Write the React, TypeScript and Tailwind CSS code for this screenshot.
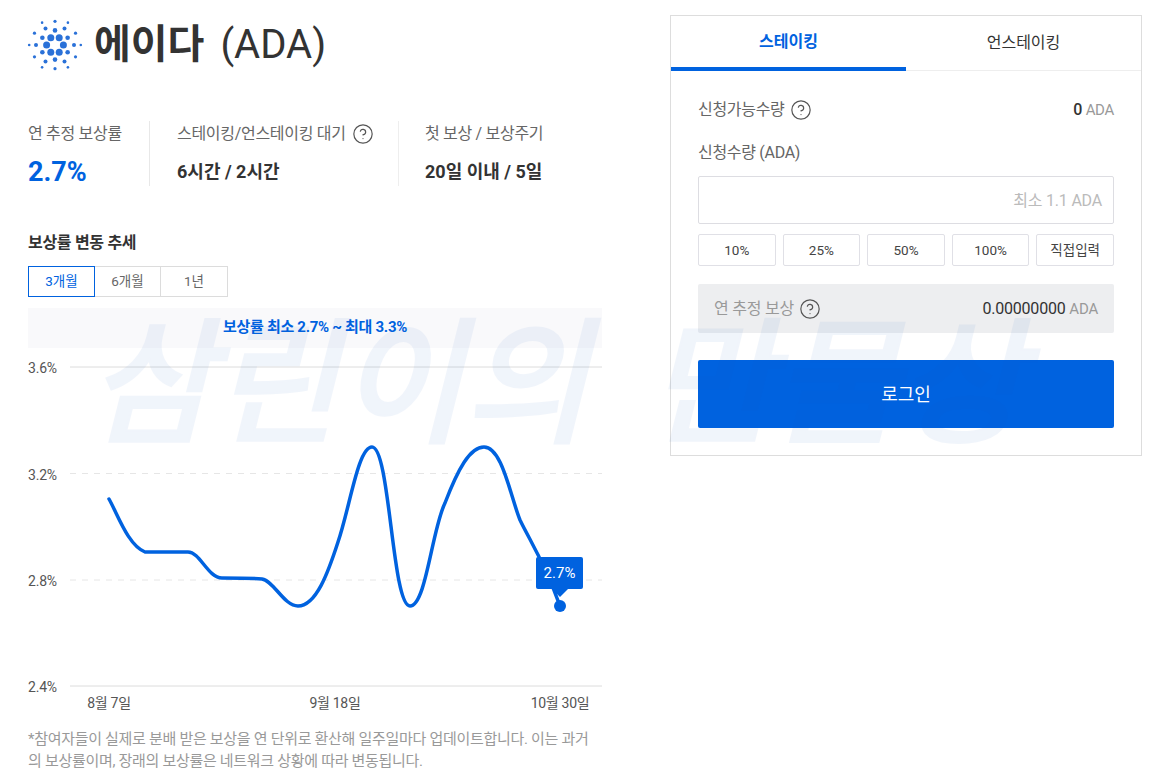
import { CircleHelp } from 'lucide-react';

const LOGO_RINGS = [
  { radius: 8.4, size: 3.5, start: 0 },
  { radius: 14.6, size: 2.3, start: 30 },
  { radius: 19, size: 2, start: 0 },
  { radius: 23.7, size: 1.6, start: 30 },
  { radius: 25.8, size: 1.3, start: 0 },
];

const PERCENTS = ['10%', '25%', '50%', '100%', '직접입력'];
const GRID = [
  { label: '3.6%', y: 10, dashed: false },
  { label: '3.2%', y: 116.5, dashed: true },
  { label: '2.8%', y: 223, dashed: true },
  { label: '2.4%', y: 329, dashed: false },
];

const LINE =
  'M81 142 C90 158 100 188 117 195 C124 195 150 195 160 195 C172 195 180 221 194 221 C204 221 224 221 234 222 C246 224 256 249 270 249 C288 249 300 216 310 185 C322 150 330 90 344 90 C362 90 364 249 382 249 C398 249 404 172 417 146 C430 112 442 90 456 90 C474 90 482 138 492 163 C502 184 516 204 532 249';

function Logo() {
  return (
    <svg width="56" height="56" viewBox="-28 -28 56 56" className="-ml-px shrink-0">
      {LOGO_RINGS.flatMap((ring, r) =>
        [0, 1, 2, 3, 4, 5].map((i) => {
          const angle = ((ring.start + i * 60) * Math.PI) / 180;
          return (
            <circle
              key={`${r}-${i}`}
              cx={ring.radius * Math.cos(angle)}
              cy={ring.radius * Math.sin(angle)}
              r={ring.size}
              fill="#2a71d8"
            />
          );
        }),
      )}
    </svg>
  );
}

function Help() {
  return <CircleHelp size={22} strokeWidth={1.3} className="shrink-0 text-[#555]" />;
}

function Stat({ label, help, children, className }: { label: string; help?: boolean; children: React.ReactNode; className: string }) {
  return (
    <div className={className}>
      <div className="flex items-center gap-[6px] pt-px text-[16px] leading-6 tracking-[-0.3px] text-[#666]">
        {label}
        {help && <Help />}
      </div>
      {children}
    </div>
  );
}

function Chart() {
  return (
    <svg width="574" height="370" viewBox="0 0 574 370" className="block">
      {GRID.map((g) => (
        <g key={g.label}>
          <line
            x1="42"
            x2="574"
            y1={g.y}
            y2={g.y}
            stroke={g.dashed ? '#e6e6e6' : '#dcdcdc'}
            strokeWidth="1"
            strokeDasharray={g.dashed ? '6 6' : undefined}
          />
          <text x="0" y={g.y + 6} fontSize="14" fill="#555" letterSpacing="-0.2">{g.label}</text>
        </g>
      ))}
      <path d={LINE} fill="none" stroke="#0062df" strokeWidth="3.5" strokeLinecap="round" />
      <circle cx="532" cy="249" r="6" fill="#0062df" />
      <rect x="508" y="200" width="47" height="32" rx="2" fill="#0062df" />
      <path d="M524 232 L532 240 L540 232 Z" fill="#0062df" />
      <text x="531.5" y="221" fontSize="15" fill="#fff" textAnchor="middle">2.7%</text>
      <text x="81" y="351" fontSize="14" letterSpacing="-0.3" fill="#555" textAnchor="middle">8월 7일</text>
      <text x="307" y="351" fontSize="14" letterSpacing="-0.3" fill="#555" textAnchor="middle">9월 18일</text>
      <text x="532" y="351" fontSize="14" letterSpacing="-0.3" fill="#555" textAnchor="middle">10월 30일</text>
    </svg>
  );
}

export default function App() {
  return (
    <div className="relative flex h-[784px] w-[1154px] items-start gap-[68px] overflow-hidden bg-white pl-[28px] font-['Roboto','Noto_Sans_CJK_KR',sans-serif]">
      <div className="w-[574px] shrink-0">
        <div className="flex h-[90px] items-center gap-[11px]">
          <Logo />
          <h1 className="text-[40px] leading-[46px] font-bold text-[#333]">
            에이다<span className="ml-4 font-normal">(ADA)</span>
          </h1>
        </div>

        <div className="mt-[31px] flex h-[65px]">
          <Stat label="연 추정 보상률" className="w-[122px] border-r border-[#e8e8e8]">
            <div className="mt-[10px] text-[27px] leading-[32px] font-bold text-[#0062df]">2.7%</div>
          </Stat>
          <Stat label="스테이킹/언스테이킹 대기" help className="w-[249px] border-r border-[#eeeeee] pl-[27px]">
            <div className="mt-[14px] text-[18px] leading-[24px] font-bold text-[#333]">6시간 / 2시간</div>
          </Stat>
          <Stat label="첫 보상 / 보상주기" className="pl-[26px]">
            <div className="mt-[14px] text-[18px] leading-[24px] font-bold text-[#333]">20일 이내 / 5일</div>
          </Stat>
        </div>

        <h2 className="mt-[46px] text-[16px] leading-[22px] font-bold tracking-[-0.3px] text-[#333]">보상률 변동 추세</h2>
        <div className="mt-[12px] flex h-[31px] w-[200px] text-[13.5px] text-[#666]">
          <div className="z-10 flex w-[67px] items-center justify-center border border-[#0062df] text-[#0062df]">3개월</div>
          <div className="-ml-px flex w-[67px] items-center justify-center border border-[#dcdcdc]">6개월</div>
          <div className="-ml-px flex w-[68px] items-center justify-center border border-[#dcdcdc]">1년</div>
        </div>
        <div className="mt-[11px] flex h-[40px] items-center justify-center bg-[#f9f9fb] pb-[2px] text-[15px] font-bold tracking-[-0.3px] text-[#0062df]">
          보상률 최소 2.7% ~ 최대 3.3%
        </div>
        <div className="mt-[9px]">
          <Chart />
        </div>
        <p className="mt-[1px] w-[566px] text-[15px] leading-[22px] tracking-[-0.3px] text-[#999]">
          *참여자들이 실제로 분배 받은 보상을 연 단위로 환산해 일주일마다 업데이트합니다. 이는 과거의 보상률이며, 장래의 보상률은 네트워크 상황에 따라 변동됩니다.
        </p>
      </div>

      <div className="mt-[15px] h-[441px] w-[472px] shrink-0 border border-[#dddddd]">
        <div className="flex h-[55px] border-b border-[#eeeeee] text-[16px]">
          <div className="-mb-px flex w-[235px] items-center justify-center border-b-[4px] border-[#0062df] font-bold text-[#0062df]">스테이킹</div>
          <div className="flex flex-1 items-center justify-center text-[#333]">언스테이킹</div>
        </div>
        <div className="px-[27px]">
          <div className="mt-[28px] flex h-[22px] items-center justify-between text-[16px] tracking-[-0.3px] text-[#666]">
            <div className="flex items-center gap-[5px]">신청가능수량 <Help /></div>
            <div className="text-[#333]"><span className="font-medium">0</span> <span className="text-[15px] text-[#999]">ADA</span></div>
          </div>
          <div className="mt-[21px] h-[22px] text-[16px] leading-[22px] tracking-[-0.3px] text-[#666]">신청수량 (ADA)</div>
          <div className="mt-[12px] flex h-[48px] items-center justify-end rounded-[2px] border border-[#dddde2] px-[11px] pt-px text-[16px] tracking-[-0.2px] text-[#bbbbbb]">최소 1.1 ADA</div>
          <div className="mt-[10px] flex gap-[7px]">
            {PERCENTS.map((p) => (
              <div key={p} className="flex h-[32px] flex-1 items-center justify-center rounded-[2px] border border-[#e0e0e6] text-[13.5px] text-[#444]">{p}</div>
            ))}
          </div>
          <div className="mt-[18px] flex h-[49px] items-center justify-between rounded-[2px] bg-[#edeef0] px-[16px] text-[16px] tracking-[-0.2px] text-[#999]">
            <div className="flex items-center gap-[5px]">연 추정 보상 <Help /></div>
            <div><span className="text-[#333]">0.00000000</span> <span className="text-[15px]">ADA</span></div>
          </div>
          <div className="mt-[27px] flex h-[68px] items-center justify-center rounded-[2px] bg-[#0062df] text-[18px] text-white">로그인</div>
        </div>
      </div>

      {/* watermark sits over everything */}
      <div className="pointer-events-none absolute top-[296px] left-[88px] text-[136px] leading-[180px] font-medium whitespace-nowrap text-[#1a5fc8] italic opacity-[0.06] [-webkit-text-stroke:2px_#1a5fc8] [word-spacing:26px]">
        삼린이의 만물상
      </div>
    </div>
  );
}
